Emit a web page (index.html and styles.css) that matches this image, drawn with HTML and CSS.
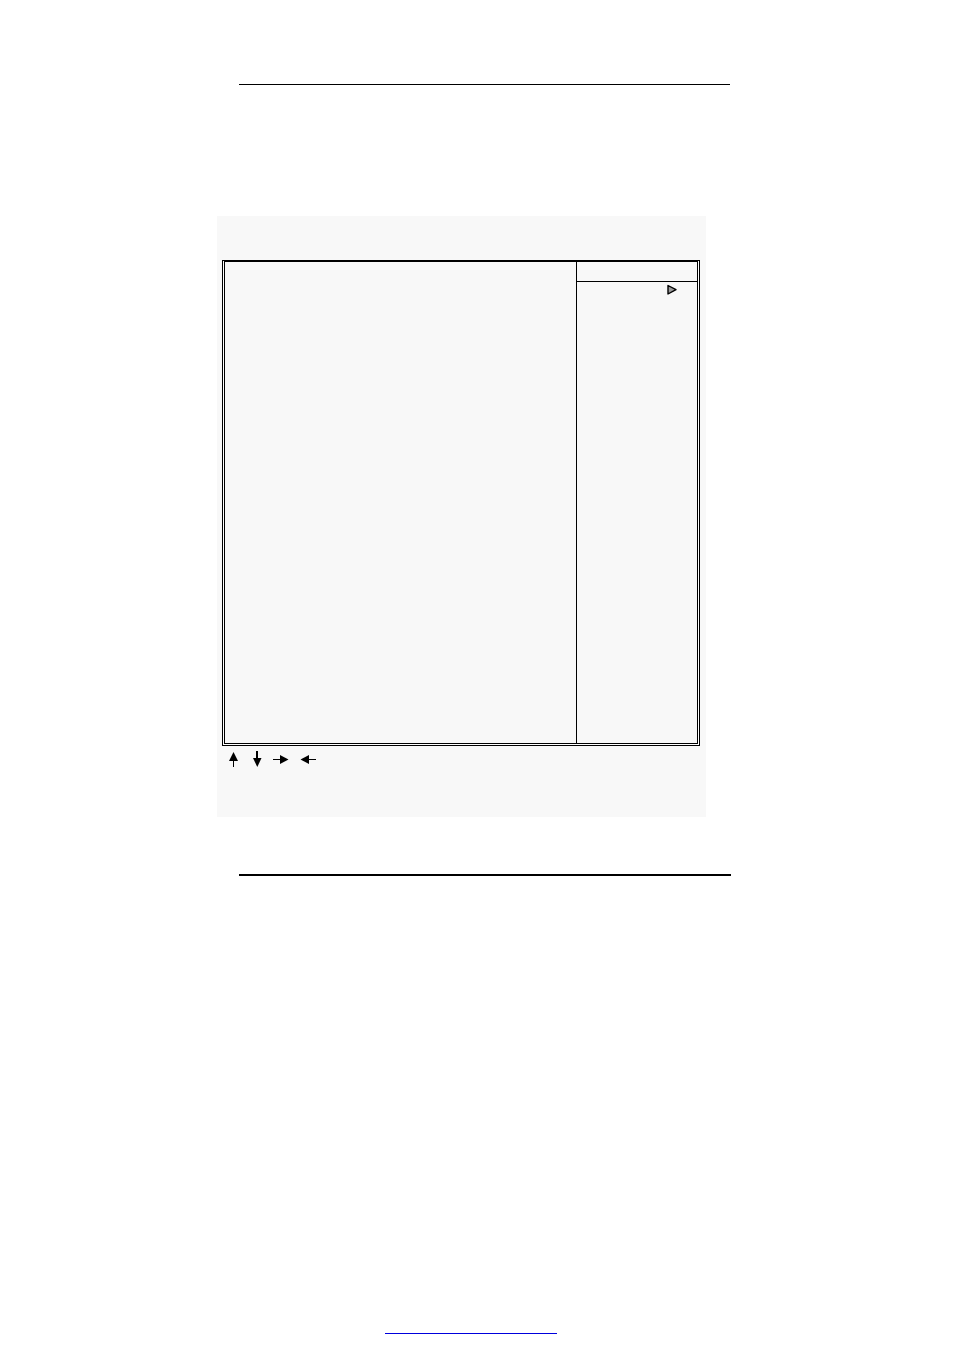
FILE: index.html
```
<!DOCTYPE html>
<html lang="en">
<head>
    <meta charset="UTF-8">
    <meta name="viewport" content="width=device-width, initial-scale=1.0">
    <title>Setup Utility</title>
    <link rel="stylesheet" href="styles.css">
</head>
<body>
    <div class="page">
        <hr class="rule">
        <section class="screen">
            <div class="frame">
                <div class="options"></div>
                <aside class="help">
                    <div class="help-title"></div>
                    <div class="help-body">
                        <svg class="marker" width="12" height="12" viewBox="0 0 12 12">
                            <path d="M2 1.500 L10 5.700 L2 10 Z" fill="#999" stroke="#000" stroke-width="1.4" stroke-linejoin="round"/>
                        </svg>
                    </div>
                </aside>
            </div>
            <div class="keys">
                <svg class="key" width="16" height="16" viewBox="0 0 16 16">
                    <path d="M8.5 1 L13 10 H4 Z"/>
                    <path d="M8 9h1v7H8z"/>
                </svg>
                <svg class="key" width="16" height="16" viewBox="0 0 16 16">
                    <path d="M7 0h2v8H7z"/>
                    <path d="M4 7 H12.500 L8.300 16 Z"/>
                </svg>
                <svg class="key" width="16" height="16" viewBox="0 0 16 16">
                    <path d="M0 8h8v1H0z"/>
                    <path d="M7 4 L15.5 8.5 L7 13 Z"/>
                </svg>
                <svg class="key" width="20" height="16" viewBox="0 0 20 16">
                    <path d="M11 8h8v1H11z"/>
                    <path d="M12 4 L3.500 8.500 L12 13 Z"/>
                </svg>
            </div>
        </section>
        <hr class="rule rule-thick">
        <footer class="footer">
            <a class="footer-link" href="#" aria-label="Website"></a>
        </footer>
    </div>
</body>
</html>
```
FILE: styles.css
```
* {
    box-sizing: border-box;
}
body {
    margin: 0;
    background: #fff;
    font-family: "Liberation Sans", Arial, sans-serif;
}
.page {
    display: flex;
    flex-direction: column;
    max-width: 520px;
    min-height: 100vh;
    margin: 0 auto;
    padding: 84px 0 17px;
}
.rule {
    align-self: stretch;
    margin: 0 7px 0 22px;
    border: 0;
    border-top: 1px solid #000;
}
.rule-thick {
    margin-right: 6px;
    border-top-width: 2px;
}
.screen {
    margin: 131px 31px 57px 0;
    padding: 44px 6px 50px 5px;
    background: #f8f8f8;
}

/* double outline, the two top lines touch */
.frame {
    display: flex;
    min-height: 486px;
    padding: 0 1px 1px;
    border: 1px solid #000;
    background: #fff;
}
.options {
    flex: 1;
    border: 1px solid #000;
    border-right: 0;
    background: #f8f8f8;
}
.help {
    display: flex;
    flex-direction: column;
    width: 122px;
    border: 1px solid #000;
    background: #f8f8f8;
}
.help-title {
    height: 20px;
    border-bottom: 1px solid #000;
}
.help-body {
    flex: 1;
    display: flex;
    justify-content: flex-end;
    align-items: flex-start;
    padding: 2px 19px;
}
.keys {
    display: flex;
    gap: 8px;
    padding: 5px 3px 0;
}
.key {
    display: block;
}
.footer {
    display: flex;
    justify-content: center;
    margin-top: auto;
    padding-right: 12px;
}
.footer-link {
    width: 172px;
    border-bottom: 1px solid #00d;
}
```
